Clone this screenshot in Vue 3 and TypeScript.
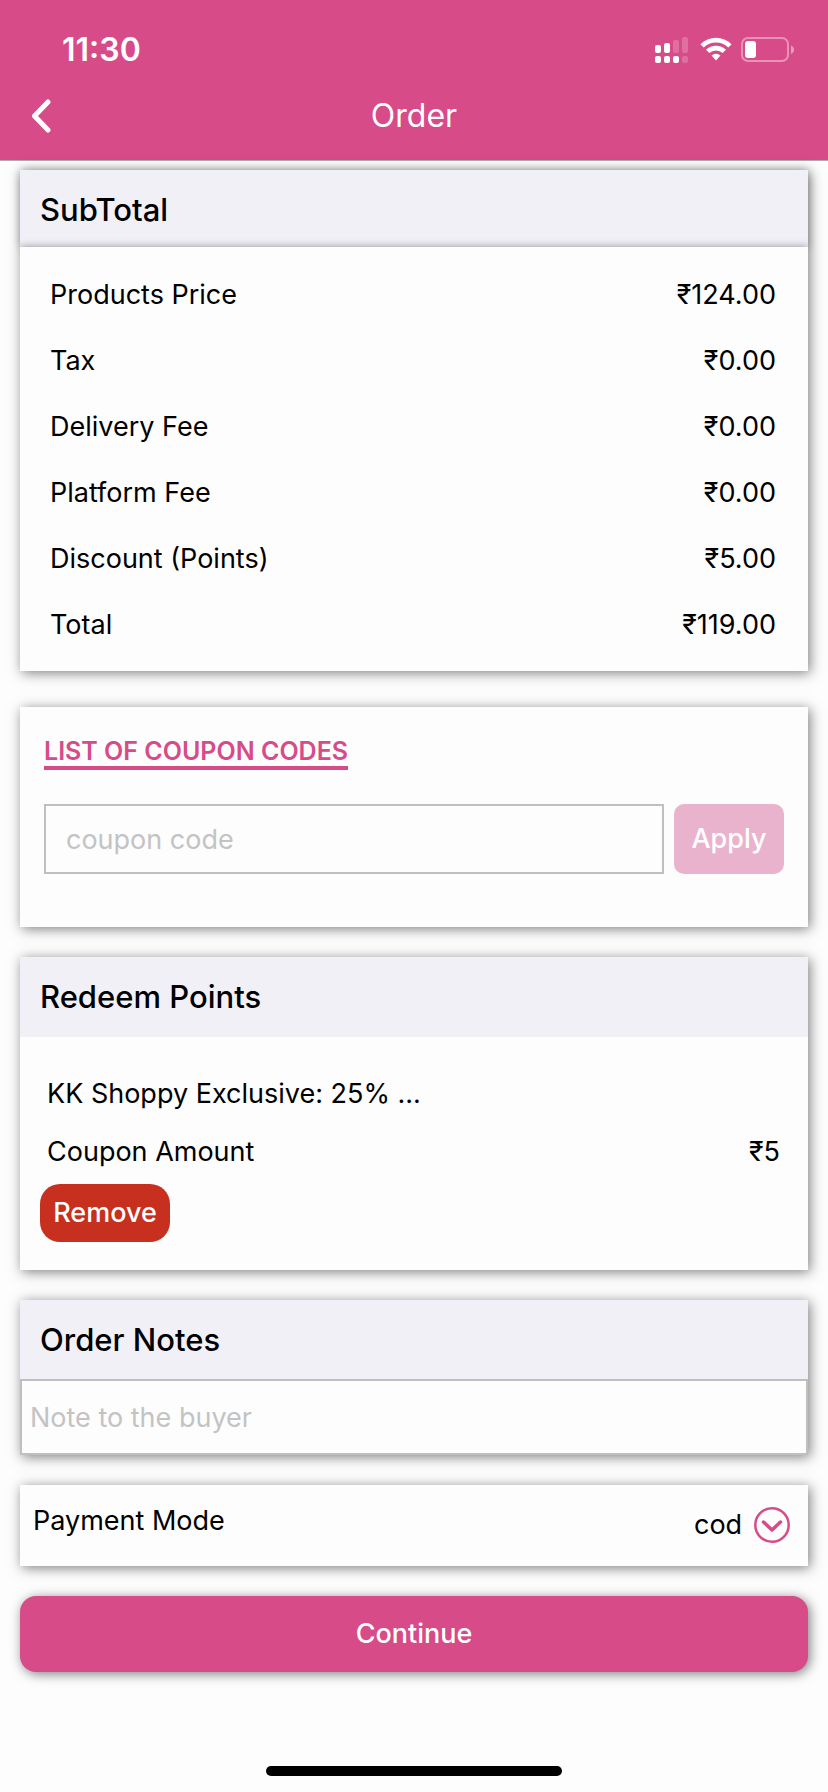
<script setup lang="ts">
import { ref } from 'vue'

interface PriceRow {
  label: string
  amount: number
}

const rows: PriceRow[] = [
  { label: 'Products Price', amount: 124 },
  { label: 'Tax', amount: 0 },
  { label: 'Delivery Fee', amount: 0 },
  { label: 'Platform Fee', amount: 0 },
  { label: 'Discount (Points)', amount: 5 },
  { label: 'Total', amount: 119 },
]

const couponCode = ref('')
const orderNote = ref('')
const paymentMode = ref('cod')

const formatPrice = (value: number): string => `₹${value.toFixed(2)}`
</script>

<template>
  <div class="screen">
    <header class="app-header">
      <div class="status-bar">
        <span class="clock">11:30</span>
        <div class="status-icons">
          <svg class="signal" viewBox="0 0 33 26" aria-hidden="true">
            <rect x="0" y="8" width="6" height="8" rx="2" />
            <rect x="9" y="6" width="6" height="10" rx="2" />
            <rect class="dim" x="18" y="3" width="6" height="13" rx="2" />
            <rect class="dim" x="27" y="0" width="6" height="16" rx="2" />
            <rect x="0" y="19" width="6" height="7" rx="2" />
            <rect x="9" y="19" width="6" height="7" rx="2" />
            <rect x="18" y="19" width="6" height="7" rx="2" />
            <rect class="dim" x="27" y="19" width="6" height="7" rx="2" />
          </svg>
          <svg class="wifi" viewBox="0 0 32 26" aria-hidden="true">
            <path d="M0.4 7.2A22.4 22.4 0 0 1 31.6 7.2L28.3 10.4A17.8 17.8 0 0 0 3.7 10.4Z" />
            <path d="M6 12.8A14.4 14.4 0 0 1 26 12.8L22.7 16.1A9.7 9.7 0 0 0 9.3 16.1Z" />
            <path d="M11.5 18.5A6.6 6.6 0 0 1 20.5 18.5L16 23.6Z" />
          </svg>
          <svg class="battery" viewBox="0 0 54 26" aria-hidden="true">
            <rect class="battery-shell" x="1" y="1" width="46" height="23" rx="6" />
            <rect x="4" y="4" width="11" height="17" rx="3" />
            <path class="battery-cap" d="M50 8.5C54 10 54 15.500 50 17Z" />
          </svg>
        </div>
      </div>
      <div class="title-bar">
        <button class="back" type="button" aria-label="Back">
          <svg viewBox="0 0 20 34" aria-hidden="true">
            <path d="M17 3L3.500 17L17 31" />
          </svg>
        </button>
        <h1>Order</h1>
      </div>
    </header>

    <main>
      <section class="card subtotal">
        <h2>SubTotal</h2>
        <div class="totals">
          <table>
            <tbody>
              <tr v-for="row in rows" :key="row.label">
                <th scope="row">{{ row.label }}</th>
                <td>{{ formatPrice(row.amount) }}</td>
              </tr>
            </tbody>
          </table>
        </div>
      </section>

      <section class="card coupon">
        <a class="coupon-link" href="#coupons">LIST OF COUPON CODES</a>
        <form class="coupon-form" @submit.prevent>
          <input v-model="couponCode" type="text" aria-label="Coupon code" placeholder="coupon code" />
          <button type="submit">Apply</button>
        </form>
      </section>

      <section class="card redeem">
        <h2>Redeem Points</h2>
        <div class="redeem-body">
          <p class="line">KK Shoppy Exclusive: 25% ...</p>
          <p class="line"><span>Coupon Amount</span><span>₹5</span></p>
          <button class="remove" type="button">Remove</button>
        </div>
      </section>

      <section class="card notes">
        <h2><label for="order-note">Order Notes</label></h2>
        <input id="order-note" v-model="orderNote" type="text" placeholder="Note to the buyer" />
      </section>

      <section class="card payment">
        <label for="payment-mode">Payment Mode</label>
        <div class="picker">
          <select id="payment-mode" v-model="paymentMode">
            <option value="cod">cod</option>
          </select>
          <svg viewBox="0 0 36 36" aria-hidden="true">
            <circle cx="18" cy="18" r="16.700" />
            <path d="M9.500 15L18 23L26.500 15" />
          </svg>
        </div>
      </section>

      <button class="continue" type="button">Continue</button>
    </main>

    <div class="home-indicator"></div>
  </div>
</template>

<style>
body {
  background: #fdfdfd;
}
</style>

<style scoped>
.screen {
  --pink: #d64b88;
  --shade: 2px 2px 12px rgba(0, 0, 0, 0.5);
  display: flex;
  flex-direction: column;
  min-height: 100vh;
  box-sizing: border-box;
  padding-bottom: 16px;
  background: #fdfdfd;
  color: #000;
  font-family: Inter, "Liberation Sans", sans-serif;
  font-size: 27px;
  line-height: 34px;
}

h1,
h2,
p {
  margin: 0;
}

button,
input,
select {
  box-sizing: border-box;
  margin: 0;
  font: inherit;
}

button {
  border: 0;
  cursor: pointer;
}

.app-header {
  background: var(--pink);
  border-bottom: 1px solid #b0a9ad;
  color: #fff;
}

.status-bar {
  display: flex;
  align-items: center;
  justify-content: space-between;
  height: 72px;
  padding: 28px 33px 0 62px;
  box-sizing: border-box;
}

.clock {
  font-size: 32px;
  font-weight: 600;
}

.status-icons {
  display: flex;
  gap: 12px;
  fill: #fff;
}

.status-icons svg {
  height: 26px;
}

.signal {
  width: 33px;
}

.wifi {
  width: 32px;
}

.battery {
  width: 54px;
  margin-left: -3px;
}

.dim {
  fill-opacity: 0.2;
}

.battery-shell {
  fill: none;
  stroke: #fff;
  stroke-opacity: 0.4;
  stroke-width: 2;
}

.battery-cap {
  fill-opacity: 0.45;
}

.title-bar {
  display: grid;
  grid-template-columns: 80px 1fr 80px;
  align-items: center;
  height: 88px;
}

.back {
  display: flex;
  padding: 0 0 0 31px;
  background: none;
}

.back svg {
  width: 20px;
  height: 34px;
  fill: none;
  stroke: #fff;
  stroke-width: 5;
  stroke-linecap: round;
  stroke-linejoin: round;
}

h1 {
  font-size: 32px;
  font-weight: 400;
  text-align: center;
}

main {
  display: flex;
  flex-direction: column;
  gap: 30px;
  padding: 9px 20px 0;
}

.card {
  background: #fdfdfd;
  box-shadow: var(--shade);
}

h2 {
  padding: 23px 20px;
  background: #f1f0f6;
  font-size: 31px;
  font-weight: 500;
  line-height: 34px;
}

.subtotal {
  margin-bottom: 6px;
}

.subtotal h2 {
  padding-bottom: 20px;
  box-shadow: 0 0 8px rgba(0, 0, 0, 0.2);
}

.totals {
  position: relative;
  padding: 15px 32px 13px 30px;
  background: #fdfdfd;
  box-shadow: 0 0 8px rgba(0, 0, 0, 0.4);
  clip-path: inset(-20px 0 0);
}

table {
  width: 100%;
  border-collapse: collapse;
}

th,
td {
  height: 66px;
  padding: 0;
  font-weight: 400;
  text-align: left;
}

td {
  text-align: right;
}

.coupon {
  padding: 30px 24px 53px;
}

.coupon-link {
  display: block;
  width: fit-content;
  border-bottom: 4px solid var(--pink);
  color: var(--pink);
  font-size: 25px;
  font-weight: 600;
  line-height: 29px;
  text-decoration: none;
}

.coupon-form {
  display: flex;
  gap: 10px;
  margin-top: 34px;
}

.coupon-form input {
  flex: 1;
  min-width: 0;
  height: 70px;
  padding: 0 20px;
}

input {
  border: 2px solid #bfbfc0;
  border-radius: 0;
  background: #fdfdfd;
}

input::placeholder {
  color: #c3c3c4;
  opacity: 1;
}

.coupon-form button {
  width: 110px;
  height: 70px;
  padding: 0;
  border-radius: 10px;
  background: #e9b3ce;
  color: #fff;
  font-weight: 500;
}

.redeem-body {
  padding: 28px 20px;
}

.line {
  display: flex;
  align-items: center;
  justify-content: space-between;
  height: 58px;
  padding: 0 8px 0 7px;
}

.remove {
  display: block;
  width: 130px;
  height: 58px;
  margin-top: 3px;
  padding: 0;
  border-radius: 20px;
  background: #c72f1f;
  color: #fff;
  font-weight: 500;
}

.notes {
  display: flex;
  flex-direction: column;
}

.notes h2 {
  padding-bottom: 22px;
}

.notes input {
  width: 100%;
  height: 76px;
  padding: 0 8px;
}

.payment {
  display: flex;
  align-items: flex-start;
  justify-content: space-between;
  height: 81px;
  box-sizing: border-box;
  padding: 19px 18px 0 13px;
}

.picker {
  position: relative;
  margin-top: 3px;
}

.picker select {
  display: block;
  height: 36px;
  padding: 0 47px 0 0;
  border: 0;
  background: none;
  color: #000;
  appearance: none;
}

.picker svg {
  position: absolute;
  top: 0;
  right: 0;
  width: 36px;
  height: 36px;
  fill: none;
  stroke: var(--pink);
  stroke-width: 2.500;
  pointer-events: none;
}

.picker path {
  stroke-width: 3.500;
  stroke-linecap: round;
  stroke-linejoin: round;
}

.continue {
  height: 76px;
  border-radius: 16px;
  background: var(--pink);
  box-shadow: var(--shade);
  color: #fff;
  font-weight: 500;
}

.home-indicator {
  width: 296px;
  height: 10px;
  margin: auto auto 0;
  border-radius: 5px;
  background: #000;
}
</style>
